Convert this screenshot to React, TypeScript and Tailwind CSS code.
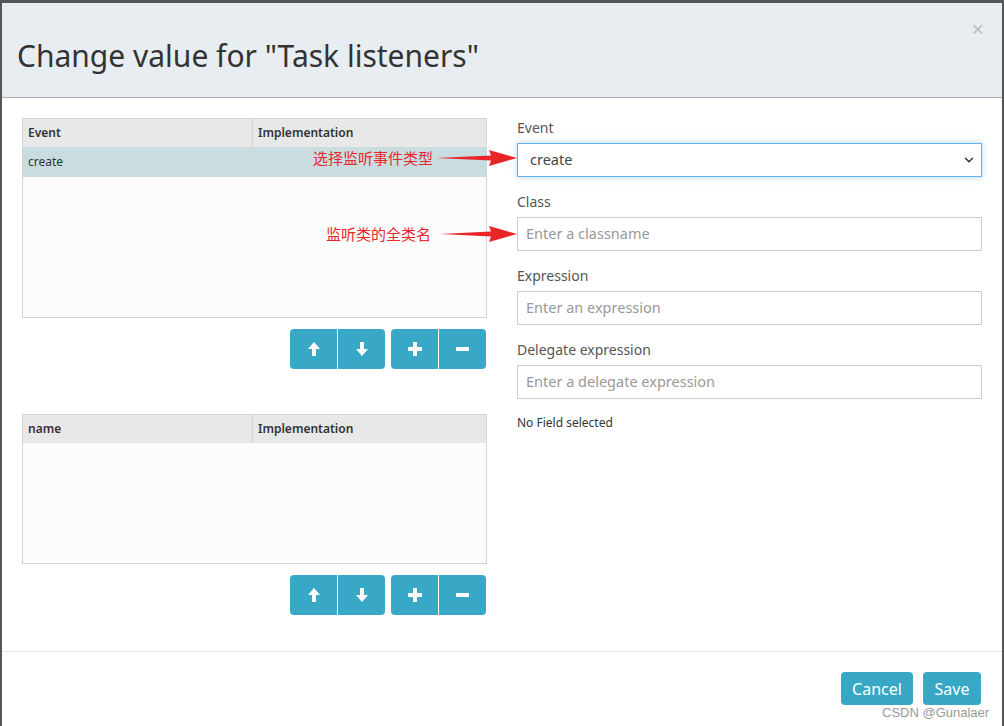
import { ChevronDown } from 'lucide-react';

const font = { fontFamily: '"Noto Sans", "Noto Sans CJK SC", sans-serif' };

function ArrowUp() {
  return (
    <svg width="12" height="14" viewBox="0 0 12 14">
      <path d="M6 0 L12 7 L8 7 L8 14 L4 14 L4 7 L0 7 Z" fill="white" />
    </svg>
  );
}

function ArrowDown() {
  return (
    <svg width="12" height="14" viewBox="0 0 12 14">
      <path d="M6 14 L12 7 L8 7 L8 0 L4 0 L4 7 L0 7 Z" fill="white" />
    </svg>
  );
}

function Plus() {
  return (
    <svg width="14" height="14" viewBox="0 0 14 14">
      <path d="M5 0 H9 V5 H14 V9 H9 V14 H5 V9 H0 V5 H5 Z" fill="white" />
    </svg>
  );
}

function Minus() {
  return (
    <svg width="13" height="4" viewBox="0 0 13 4">
      <rect width="13" height="4" fill="white" />
    </svg>
  );
}

function ButtonRow() {
  const btn = 'flex h-[40px] w-[47px] items-center justify-center bg-[#39a8c6]';
  return (
    <div className="mt-[11px] flex justify-end gap-[6px] pr-[1px]">
      <div className="flex overflow-hidden rounded-[4px]">
        <div className={btn}><ArrowUp /></div>
        <div className="w-px bg-white" />
        <div className={btn}><ArrowDown /></div>
      </div>
      <div className="flex overflow-hidden rounded-[4px]">
        <div className={btn}><Plus /></div>
        <div className="w-px bg-white" />
        <div className={btn}><Minus /></div>
      </div>
    </div>
  );
}

function Grid({ first, height, rows }: { first: string; height: string; rows: string[] }) {
  return (
    <div className={`flex flex-col border border-[#d4d4d4] bg-[#fcfcfc] text-[12px] text-[#333] ${height}`}>
      <div className="flex h-[28px] items-center bg-[#e8e8e8] font-semibold">
        <div className="w-[230px] border-r border-[#d4d4d4] pl-[5px] leading-[28px]">{first}</div>
        <div className="pl-[5px]">Implementation</div>
      </div>
      {rows.map((r) => (
        <div key={r} className="flex h-[30px] items-center bg-[#c9dde1]">
          <div className="h-full w-[230px] border-r border-[#d4d4d4] pl-[5px] leading-[30px]">{r}</div>
          <div />
        </div>
      ))}
    </div>
  );
}

function Field({ label, placeholder }: { label: string; placeholder: string }) {
  return (
    <div className="mt-[15px]">
      <div className="h-[20px] text-[14px] leading-[20px] text-[#555]">{label}</div>
      <div className="mt-[5px] flex h-[34px] items-center border border-[#ccc] px-[8px] text-[14.5px] text-[#999]">
        {placeholder}
      </div>
    </div>
  );
}

export default function App() {
  return (
    <div className="relative h-[726px] w-[1004px] overflow-hidden bg-[#555] pl-[2px] pr-[2px] pt-[3px]" style={font}>
      <div className="flex h-[723px] flex-col bg-white">
        <div className="relative flex h-[95px] shrink-0 items-center border-b border-[#a9aeb4] bg-[#e8edf1] pl-[15px] pt-[10px]">
          <h1 className="text-[30px] text-[#333]">Change value for "Task listeners"</h1>
          <span className="absolute right-[18px] top-[14px] text-[22px] leading-none text-[#bcbcbc]">×</span>
        </div>

        <div className="grid h-[553px] grid-cols-2 gap-[30px] px-[20px] pt-[20px]">
          <div>
            <Grid first="Event" height="h-[200px]" rows={['create']} />
            <ButtonRow />
            <div className="mt-[45px]">
              <Grid first="name" height="h-[150px]" rows={[]} />
            </div>
            <ButtonRow />
          </div>

          <div>
            <div className="h-[20px] text-[14px] leading-[20px] text-[#555]">Event</div>
            <div className="mt-[5px] flex h-[34px] items-center justify-between border border-[#66afe9] pl-[12px] pr-[5px] text-[14.5px] text-[#444] shadow-[0_0_6px_rgba(102,175,233,0.5)]">
              <span>create</span>
              <ChevronDown size={14} strokeWidth={2.5} className="text-[#333]" />
            </div>
            <Field label="Class" placeholder="Enter a classname" />
            <Field label="Expression" placeholder="Enter an expression" />
            <Field label="Delegate expression" placeholder="Enter a delegate expression" />
            <div className="mt-[15px] text-[12px] text-[#333]">No Field selected</div>
          </div>
        </div>

        <div className="flex flex-1 justify-end gap-[10px] border-t border-[#e5e5e5] pr-[21px] pt-[20px]">
          <div className="flex h-[33px] w-[72px] items-center justify-center rounded-[4px] bg-[#39a8c6] text-[16px] text-white">Cancel</div>
          <div className="flex h-[33px] w-[58px] items-center justify-center rounded-[4px] bg-[#39a8c6] text-[16px] text-white">Save</div>
        </div>
      </div>

      <span className="absolute left-[313px] top-[147px] text-[15px] leading-[22px] text-[#e8262a]">选择监听事件类型</span>
      <span className="absolute left-[326px] top-[223px] text-[15px] leading-[22px] text-[#e8262a]">监听类的全类名</span>
      <svg className="absolute left-0 top-0" width="1004" height="726">
        <polygon points="436,158 491,155.5 489,150 517,158 489,166 491,160.5" fill="#e8262a" />
        <polygon points="440,234 491,231.5 489,226 517,234 489,242 491,236.5" fill="#e8262a" />
      </svg>
      <span className="absolute left-[882px] top-[703px] text-[13px] text-[#999]" style={{ fontFamily: '"Liberation Sans", sans-serif' }}>
        CSDN @Gunalaer
      </span>
    </div>
  );
}
